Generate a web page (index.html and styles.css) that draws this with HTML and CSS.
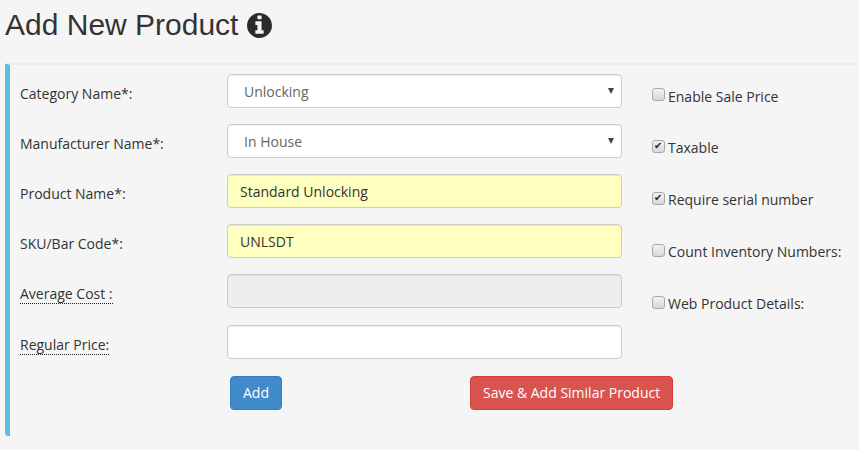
FILE: index.html
```html
<!DOCTYPE html>
<html lang="en">

<head>
    <meta charset="UTF-8">
    <meta name="viewport" content="width=device-width, initial-scale=1.0">
    <title>Add New Product</title>
    <link rel="stylesheet" href="styles.css">
</head>

<body>
    <h1 class="page-title">Add New Product
        <svg class="info-icon" viewBox="0 128 1536 1536" aria-hidden="true">
            <path d="M1024 1376v-160q0-14-9-23t-23-9h-96v-512q0-14-9-23t-23-9h-320q-14 0-23 9t-9 23v160q0 14 9 23t23 9h96v320h-96q-14 0-23 9t-9 23v160q0 14 9 23t23 9h448q14 0 23-9t9-23zm-128-896v-160q0-14-9-23t-23-9h-192q-14 0-23 9t-9 23v160q0 14 9 23t23 9h192q14 0 23-9t9-23zm640 416q0 209-103 385.5t-279.5 279.5-385.5 103-385.5-103-279.5-279.5-103-385.5 103-385.5 279.5-279.5 385.5-103 385.5 103 279.5 279.5 103 385.5z" />
        </svg>
    </h1>

    <form class="panel">
        <div class="fields">
            <div class="form-row">
                <label class="form-label">Category Name*:</label>
                <div class="select-wrap">
                    <select class="form-control select-control">
                        <option>Unlocking</option>
                    </select>
                </div>
            </div>
            <div class="form-row">
                <label class="form-label">Manufacturer Name*:</label>
                <div class="select-wrap">
                    <select class="form-control select-control">
                        <option>In House</option>
                    </select>
                </div>
            </div>
            <div class="form-row">
                <label class="form-label">Product Name*:</label>
                <input class="form-control autofilled" type="text" value="Standard Unlocking">
            </div>
            <div class="form-row">
                <label class="form-label">SKU/Bar Code*:</label>
                <input class="form-control autofilled" type="text" value="UNLSDT">
            </div>
            <div class="form-row">
                <label class="form-label"><span class="hint">Average Cost :</span></label>
                <input class="form-control" type="text" disabled>
            </div>
            <div class="form-row">
                <label class="form-label"><span class="hint">Regular Price:</span></label>
                <input class="form-control" type="text">
            </div>
            <div class="form-actions">
                <button class="btn btn-add" type="button">Add</button>
                <button class="btn btn-save" type="button">Save &amp; Add Similar Product</button>
            </div>
        </div>

        <div class="options">
            <label class="option"><input type="checkbox">Enable Sale Price</label>
            <label class="option"><input type="checkbox" checked>Taxable</label>
            <label class="option"><input type="checkbox" checked>Require serial number</label>
            <label class="option"><input type="checkbox">Count Inventory Numbers:</label>
            <label class="option"><input type="checkbox">Web Product Details:</label>
        </div>
    </form>
</body>

</html>
```

FILE: styles.css
```css
* {
    box-sizing: border-box;
}

html,
body {
    height: 100%;
}

body {
    margin: 0;
    padding: 0 0 14px 5px;
    background: #f5f5f5;
    color: #333;
    font-family: "Open Sans", sans-serif;
    font-size: 14px;
    overflow: hidden;
}

.page-title {
    display: flex;
    align-items: center;
    gap: 9px;
    height: 63px;
    margin: 0;
    padding-bottom: 13px;
    font-family: "Liberation Sans", Arial, sans-serif;
    font-size: 30px;
    font-weight: 400;
    color: #333;
}

.info-icon {
    width: 25px;
    height: 25px;
    fill: #2b2b2b;
}

.panel {
    display: flex;
    height: 373px;
    padding: 9px 0 0 10px;
    border-left: 5px solid #5bc0de;
    border-top: 2px solid #eee;
    border-radius: 3px;
}

.fields {
    width: 602px;
    flex: none;
}

.form-row {
    display: flex;
    height: 34px;
    margin-bottom: 16.11px;
}

.form-label {
    width: 207px;
    flex: none;
    padding-top: 10px;
    line-height: 20px;
    color: #333;
}

.hint {
    display: inline-block;
    line-height: 19px;
    border-bottom: 1px dotted #222;
}

.form-control {
    display: block;
    width: 395px;
    height: 34px;
    padding: 6px 12px;
    border: 1px solid #ccc;
    border-radius: 4px;
    background: #fff;
    color: #555;
    font-family: inherit;
    font-size: 14px;
    box-shadow: inset 0 1px 1px rgba(0, 0, 0, .075);
}

.form-control:disabled {
    background: #eee;
}

.autofilled {
    background: #ffffc0;
    color: #333;
}

.select-wrap {
    position: relative;
}

.select-wrap::after {
    content: "";
    position: absolute;
    top: 14px;
    right: 8px;
    border-left: 3px solid transparent;
    border-right: 3px solid transparent;
    border-top: 6px solid #444;
}

.select-control {
    padding-left: 16px;
    appearance: none;
    color: #666;
}

.form-actions {
    display: flex;
    margin: 17px 0 0 210px;
}

.btn {
    flex: none;
    height: 34px;
    padding: 6px 12px;
    border: 1px solid transparent;
    border-radius: 4px;
    color: #fff;
    font-family: inherit;
    font-size: 14px;
    white-space: nowrap;
    cursor: pointer;
}

.btn-add {
    background: #428bca;
    border-color: #357ebd;
}

.btn-save {
    margin-left: 188px;
    background: #d9534f;
    border-color: #d43f3a;
}

.options {
    display: flex;
    flex-direction: column;
    gap: 31.9px;
    margin-left: 30px;
    padding-top: 12px;
}

.option {
    display: flex;
    align-items: center;
    height: 20px;
    white-space: nowrap;
}

.option input {
    position: relative;
    flex: none;
    width: 13px;
    height: 13px;
    margin: -3px 3px 0 0;
    border: 1px solid #a9a9a9;
    border-radius: 3px;
    background: linear-gradient(#f2f2f2, #d8d8d8);
    appearance: none;
}

.option input:checked::after {
    content: "\2714";
    position: absolute;
    top: -2px;
    left: 1px;
    font-family: "DejaVu Sans", sans-serif;
    font-size: 10px;
    line-height: 14px;
    color: #222;
}
```
